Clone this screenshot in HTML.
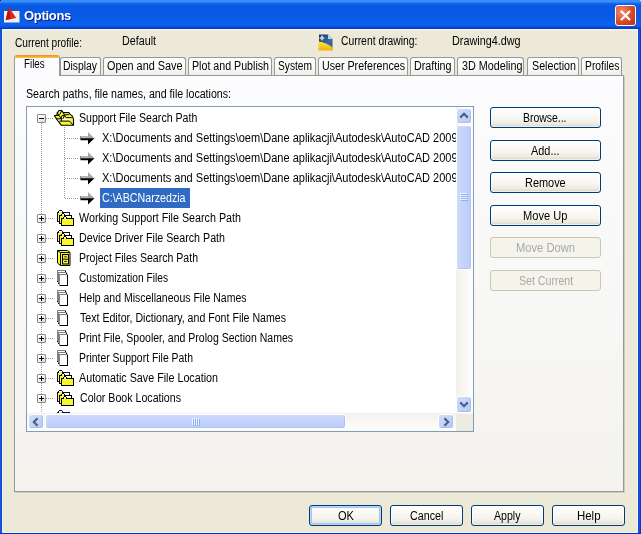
<!DOCTYPE html>
<html>
<head>
<meta charset="utf-8">
<title>Options</title>
<style>
html,body{margin:0;padding:0;}
body{width:641px;height:534px;overflow:hidden;background:#fff;position:relative;font-family:"Liberation Sans",sans-serif;font-size:11px;color:#000;}
div,span,svg{position:absolute;}
#win{left:0;top:0;width:641px;height:534px;background:#0A45D8;overflow:hidden;border-radius:0 3px 0 0;}
#frameL{left:0;top:29px;width:2px;height:505px;background:linear-gradient(to right,#1C5EEA,#0A3FC8);}
#frameR{left:638px;top:29px;width:3px;height:505px;background:linear-gradient(to right,#0A3FC8,#1450E0 50%,#0A30B0);}
#frameB{left:0;top:533px;width:641px;height:1px;background:#0A2FB0;}
#title{left:0;top:0;width:641px;height:29px;background:linear-gradient(to bottom,#3A8EF8 0%,#3A8EF8 6%,#0E62EA 13%,#0858E4 22%,#0A5AE8 60%,#0C60F0 85%,#0A54E0 92%,#083CBC 97%,#0A3CC0 100%);}
#titletext{will-change:transform;left:23.5px;top:7px;font-weight:bold;font-size:13px;line-height:17px;color:#fff;text-shadow:1px 1px 0 #0A1883;white-space:nowrap;letter-spacing:-0.3px;}
#client{left:2px;top:29px;width:636px;height:504px;background:#ECE9D8;box-shadow:inset 1px 1px 0 #F2F5FC, inset -1px -1px 0 #F2F5FC, inset 0 2px 0 #EFEEE6;}
.t{white-space:nowrap;line-height:14px;font-size:12px;transform-origin:0 0;filter:grayscale(1);}
.tab{top:57px;height:19px;box-sizing:border-box;border:1px solid #919B9C;border-bottom:none;border-radius:3px 3px 0 0;background:linear-gradient(#FFFFFF,#FAFAF9 50%,#F0F0EA 90%,#ECEBE6);}
#tabsel{left:14px;top:55px;width:46px;height:21px;box-sizing:border-box;border:1px solid #919B9C;border-bottom:none;border-top:none;border-radius:3px 3px 0 0;background:#FCFCFE;overflow:hidden;}
#tabsel i{position:absolute;left:0;top:0;width:100%;height:3px;background:linear-gradient(#E68B2C,#FFC73C);}
#panel{left:14px;top:75px;width:610px;height:417px;box-sizing:border-box;border:1px solid #919B9C;background:linear-gradient(#FCFCFE,#F4F3EE);box-shadow:1px 1px 0 rgba(0,0,0,0.12);}
#tree{left:26px;top:106px;width:448px;height:326px;box-sizing:border-box;border:1px solid #7F9DB9;background:#fff;overflow:hidden;}
#view{left:0;top:0;width:429px;height:306px;overflow:hidden;background:#fff;}
.btn{box-sizing:border-box;border:1px solid #003C74;border-radius:3px;background:linear-gradient(#FFFFFF,#F6F5EF 60%,#ECEADF 85%,#D6D0C5);height:21px;box-shadow:inset 0 0 0 1px rgba(255,255,255,.6);}
.btn.def{box-shadow:inset 0 0 0 1px #BCD4F6, inset 0 0 0 2px #A4C4F2;}
.btn.dis{border-color:#C9C7BA;background:#F5F4EA;box-shadow:none;}
.vd{width:1px;background-image:linear-gradient(to bottom,#9C9C9C 50%,transparent 50%);background-size:1px 2px;}
.hd{height:1px;background-image:linear-gradient(to right,#9C9C9C 50%,transparent 50%);background-size:2px 1px;}
.pm{width:9px;height:9px;box-sizing:border-box;border:1px solid #8B8B8B;border-radius:1px;background:linear-gradient(135deg,#FFFFFF 20%,#D9D6CA 100%);}
.pm b{position:absolute;left:1px;top:3px;width:5px;height:1px;background:#000;}
.pm u{position:absolute;left:3px;top:1px;width:1px;height:5px;background:#000;}
.sbtn{width:16px;height:16px;box-sizing:border-box;border:1px solid #FFFFFF;border-radius:3px;background:linear-gradient(135deg,#D0DDFE,#B6C9F7);box-shadow:inset -1px -1px 0 #A8BCF0;}
.thumb{box-sizing:border-box;border:1px solid #FFFFFF;border-radius:3px;background:#C3D3FD;box-shadow:inset -1px -1px 0 #B0C2F4, inset 1px 1px 0 #CCDAFE;}
</style>
</head>
<body>
<div id="win"><div id="title"></div>
<div style="left:615px;top:5px;width:21px;height:21px;box-sizing:border-box;border:1px solid #fff;border-radius:3px;background:radial-gradient(circle at 30% 30%,#F0906E,#D8482A 55%,#B8300E);"><svg width="19" height="19" viewBox="0 0 19 19" style="left:0;top:0"><path d="M5 5 L14 14 M14 5 L5 14" stroke="#fff" stroke-width="2.2" stroke-linecap="butt" fill="none"/></svg></div>
<svg width="18" height="18" viewBox="0 0 18 18" style="left:3px;top:6px"><rect x="1" y="5" width="15.5" height="11.5" fill="#F4EEE4"/><path d="M5.7 1 L13.2 12 L2.7 14 Z" fill="#D8261C"/><path d="M5.7 1 L7.5 13 L2.7 14 Z" fill="#B8160E"/></svg>
<div style="left:0;top:0;width:1px;height:1px;background:#001A80;"></div>
<div id="titletext">Options</div>
<div id="client"></div><div id="frameL"></div><div id="frameR"></div><div id="frameB"></div></div>
<div class="t" style="left:14.5px;top:36px;transform:scaleX(0.8442);">Current profile:</div>
<div class="t" style="left:121.7px;top:34px;transform:scaleX(0.8942);">Default</div>
<div class="t" style="left:340.5px;top:34px;transform:scaleX(0.8624);">Current drawing:</div>
<div class="t" style="left:451.5px;top:34px;transform:scaleX(0.9009);">Drawing4.dwg</div>
<svg width="16" height="17" viewBox="0 0 16 17" style="left:318px;top:34px"><defs><linearGradient id="dg" x1="0" y1="0" x2="1" y2="1"><stop offset="0" stop-color="#1C2C5C"/><stop offset="0.6" stop-color="#3C6CA0"/><stop offset="1" stop-color="#2C4C8C"/></linearGradient><linearGradient id="yg" x1="0" y1="0" x2="0" y2="1"><stop offset="0" stop-color="#FFE838"/><stop offset="1" stop-color="#F0B010"/></linearGradient></defs><path d="M1 0.5 H10 L14.5 5 V16 H1 Z" fill="url(#dg)"/><path d="M10 0.5 L14.5 5 H10 Z" fill="#B8D4F0"/><path d="M0.5 7.5 C6 8 11 10.5 15 14 V16.5 H0.5 Z" fill="url(#yg)"/><path d="M4 1.5 V6.5 M1.5 4 H6.5" stroke="#E8FFFF" stroke-width="1.2"/><circle cx="4" cy="4" r="1.5" fill="#E8FFFF"/><circle cx="4" cy="4" r="0.6" fill="#2C4C7C"/></svg>
<div id="panel"></div>
<div class="tab" style="left:60px;width:41px;"></div>
<div class="tab" style="left:103px;width:83px;"></div>
<div class="tab" style="left:188px;width:84px;"></div>
<div class="tab" style="left:274px;width:42px;"></div>
<div class="tab" style="left:318px;width:90px;"></div>
<div class="tab" style="left:410px;width:45px;"></div>
<div class="tab" style="left:457px;width:67px;"></div>
<div class="tab" style="left:527px;width:52px;"></div>
<div class="tab" style="left:581px;width:41px;"></div>
<div style="left:15px;top:75px;width:608px;height:1px;background:#919B9C;"></div>
<div id="tabsel"><i></i></div>
<div style="left:15px;top:75px;width:44px;height:1px;background:#FCFCFE;"></div>
<div class="t" style="left:62.7px;top:59px;transform:scaleX(0.8641);">Display</div>
<div class="t" style="left:107px;top:59px;transform:scaleX(0.9053);">Open and Save</div>
<div class="t" style="left:192px;top:59px;transform:scaleX(0.8879);">Plot and Publish</div>
<div class="t" style="left:277.5px;top:59px;transform:scaleX(0.8498);">System</div>
<div class="t" style="left:322px;top:59px;transform:scaleX(0.8889);">User Preferences</div>
<div class="t" style="left:414px;top:59px;transform:scaleX(0.8925);">Drafting</div>
<div class="t" style="left:461.5px;top:59px;transform:scaleX(0.8980);">3D Modeling</div>
<div class="t" style="left:531.5px;top:59px;transform:scaleX(0.8913);">Selection</div>
<div class="t" style="left:585px;top:59px;transform:scaleX(0.8597);">Profiles</div>
<div class="t" style="left:23.6px;top:57px;transform:scaleX(0.8131);">Files</div>
<div class="t" style="left:25.5px;top:87px;transform:scaleX(0.8857);">Search paths, file names, and file locations:</div>
<div id="tree"><div id="view">
<div class="vd" style="left:14px;top:16px;height:291px;"></div>
<div class="vd" style="left:37px;top:20px;height:72px;"></div>
<div class="hd" style="left:19px;top:11px;width:8px;"></div>
<div class="pm" style="left:10px;top:7px;"><b></b></div>
<svg width="21" height="17" viewBox="0 0 21 17" style="left:27px;top:3px"><path d="M5.1 0.5 H7.7 L9.2 2.6 L14.9 2.5 L16 4.4 L17.9 5.6 L19.5 8.9 V15.3 H7.4 L2.5 8.9 L0.5 5.8 L2.9 5.2 L3.2 2.9 Z" fill="#F6F63A" stroke="#000" stroke-width="1.1" stroke-linejoin="round"/><path d="M8.2 8.8 H15.4 L16.2 10.7 H8.2 Z" fill="#FFF6F2"/><path d="M3.4 9.3 H6.6 V10.7 H4.6 Z" fill="#fff"/><path d="M10.6 3.4 H14.4 L15 4.5 H11.2 Z" fill="#FFFFE0"/><path d="M5.5 11.1 H15.6 L19 15 M7.4 8.1 V11.1 M2.5 8.8 H6.8 M12.2 7.6 H17.8 M9.2 2.6 L10.7 5.5 L12.2 7.6 M0.5 5.4 H5 M3.2 2.9 L5 5.4 L7 8.5 M7.7 0.7 L5.6 4.6 M10.7 5.5 L8 5.6 L6.8 8.6 M10.7 5.5 L8.8 8.9 M14.9 4.6 L10.6 4.8" stroke="#000" stroke-width="1" fill="none"/></svg>
<div class="t" style="left:51.599999999999994px;top:4px;transform:scaleX(0.8823);">Support File Search Path</div>
<div class="hd" style="left:38px;top:31px;width:13px;"></div>
<svg width="15" height="13" viewBox="0 0 15 13" style="left:53px;top:25px"><path d="M8 0 L14.5 6.4 H8 Z" fill="#A8A8A8"/><path d="M1 4 H8 V6.4 H0 Z" fill="#B4B4B4"/><path d="M0 6.2 H14.5 L8 12.5 V8.3 H0.6 Z" fill="#000"/><path d="M0 4.5 L1 4 V8 H0 Z" fill="#707070"/></svg>
<div class="t" style="left:74.5px;top:24px;transform:scaleX(0.9190);">X:\Documents and Settings\oem\Dane aplikacji\Autodesk\AutoCAD 2009</div>
<div class="hd" style="left:38px;top:51px;width:13px;"></div>
<svg width="15" height="13" viewBox="0 0 15 13" style="left:53px;top:45px"><path d="M8 0 L14.5 6.4 H8 Z" fill="#A8A8A8"/><path d="M1 4 H8 V6.4 H0 Z" fill="#B4B4B4"/><path d="M0 6.2 H14.5 L8 12.5 V8.3 H0.6 Z" fill="#000"/><path d="M0 4.5 L1 4 V8 H0 Z" fill="#707070"/></svg>
<div class="t" style="left:74.5px;top:44px;transform:scaleX(0.9190);">X:\Documents and Settings\oem\Dane aplikacji\Autodesk\AutoCAD 2009</div>
<div class="hd" style="left:38px;top:71px;width:13px;"></div>
<svg width="15" height="13" viewBox="0 0 15 13" style="left:53px;top:65px"><path d="M8 0 L14.5 6.4 H8 Z" fill="#A8A8A8"/><path d="M1 4 H8 V6.4 H0 Z" fill="#B4B4B4"/><path d="M0 6.2 H14.5 L8 12.5 V8.3 H0.6 Z" fill="#000"/><path d="M0 4.5 L1 4 V8 H0 Z" fill="#707070"/></svg>
<div class="t" style="left:74.5px;top:64px;transform:scaleX(0.9190);">X:\Documents and Settings\oem\Dane aplikacji\Autodesk\AutoCAD 2009</div>
<div class="hd" style="left:38px;top:91px;width:13px;"></div>
<svg width="15" height="13" viewBox="0 0 15 13" style="left:53px;top:85px"><path d="M8 0 L14.5 6.4 H8 Z" fill="#A8A8A8"/><path d="M1 4 H8 V6.4 H0 Z" fill="#B4B4B4"/><path d="M0 6.2 H14.5 L8 12.5 V8.3 H0.6 Z" fill="#000"/><path d="M0 4.5 L1 4 V8 H0 Z" fill="#707070"/></svg>
<div style="left:73px;top:81px;width:90px;height:20px;background:#316AC5;"></div>
<div class="t" style="left:75px;top:84px;transform:scaleX(0.8880);color:#fff;">C:\ABCNarzedzia</div>
<div class="hd" style="left:19px;top:111px;width:8px;"></div>
<div class="pm" style="left:10px;top:107px;"><b></b><u></u></div>
<svg width="18" height="16" viewBox="0 0 18 16" style="left:30px;top:103px" shape-rendering="crispEdges"><path d="M0.5 11.5 V2.5 H1.5 V1.5 L2.5 0.5 H4.5 L5.5 1.5 V2.5 H12.5 V11.5 Z" fill="#F4F43C" stroke="#0A0A50"/><rect x="2" y="1" width="3" height="1" fill="#FFFFE8"/><rect x="7" y="3" width="5" height="2" fill="#FFFFE0"/><path d="M2.5 13.5 V5.5 H4.5 V4.5 L5.5 3.5 H6.5 L7.5 4.5 V5.5 H14.5 V13.5 Z" fill="#F4F43C" stroke="#000"/><rect x="5" y="4" width="2" height="1" fill="#FFFFE8"/><rect x="9" y="6" width="5" height="2" fill="#FFFFE0"/><path d="M4.5 15.5 V8.5 H6.5 V7.5 L7.5 6.5 H8.5 L9.5 7.5 V8.5 H16.5 V15.5 Z" fill="#F8F830" stroke="#000"/><rect x="7" y="7" width="2" height="1" fill="#FFFFE8"/></svg>
<div class="t" style="left:52px;top:104px;transform:scaleX(0.8940);">Working Support File Search Path</div>
<div class="hd" style="left:19px;top:131px;width:8px;"></div>
<div class="pm" style="left:10px;top:127px;"><b></b><u></u></div>
<svg width="18" height="16" viewBox="0 0 18 16" style="left:30px;top:123px" shape-rendering="crispEdges"><path d="M0.5 11.5 V2.5 H1.5 V1.5 L2.5 0.5 H4.5 L5.5 1.5 V2.5 H12.5 V11.5 Z" fill="#F4F43C" stroke="#0A0A50"/><rect x="2" y="1" width="3" height="1" fill="#FFFFE8"/><rect x="7" y="3" width="5" height="2" fill="#FFFFE0"/><path d="M2.5 13.5 V5.5 H4.5 V4.5 L5.5 3.5 H6.5 L7.5 4.5 V5.5 H14.5 V13.5 Z" fill="#F4F43C" stroke="#000"/><rect x="5" y="4" width="2" height="1" fill="#FFFFE8"/><rect x="9" y="6" width="5" height="2" fill="#FFFFE0"/><path d="M4.5 15.5 V8.5 H6.5 V7.5 L7.5 6.5 H8.5 L9.5 7.5 V8.5 H16.5 V15.5 Z" fill="#F8F830" stroke="#000"/><rect x="7" y="7" width="2" height="1" fill="#FFFFE8"/></svg>
<div class="t" style="left:51.599999999999994px;top:124px;transform:scaleX(0.8899);">Device Driver File Search Path</div>
<div class="hd" style="left:19px;top:151px;width:8px;"></div>
<div class="pm" style="left:10px;top:147px;"><b></b><u></u></div>
<svg width="14" height="17" viewBox="0 0 14 17" style="left:30px;top:143px"><path d="M0.5 0.5 H10.5 L13 2.5 V15.5 H3.5 L0.5 13 Z" fill="#FFFF30" stroke="#000"/><path d="M0.5 0.5 L3.5 2.5 H13 M3.5 2.5 V15.5" stroke="#000" fill="none"/><rect x="5.5" y="4.5" width="6" height="9.5" fill="#FAFA40" stroke="#000" stroke-width="1.1"/><path d="M5.5 9.2 H11.5" stroke="#000" stroke-width="1"/><rect x="7.4" y="6.3" width="2.2" height="1.1" fill="#000"/><rect x="7.4" y="10.9" width="2.2" height="1.1" fill="#000"/></svg>
<div class="t" style="left:51.7px;top:144px;transform:scaleX(0.8789);">Project Files Search Path</div>
<div class="hd" style="left:19px;top:171px;width:8px;"></div>
<div class="pm" style="left:10px;top:167px;"><b></b><u></u></div>
<svg width="12" height="16" viewBox="0 0 12 16" style="left:30px;top:163px" shape-rendering="crispEdges"><path d="M0.5 11.5 V0.5 H8.5" fill="none" stroke="#808080"/><path d="M8.5 0.5 V2.5" stroke="#000" fill="none"/><rect x="1" y="1" width="7" height="1" fill="#fff"/><path d="M1.5 13.5 V2.5 H9.5" fill="none" stroke="#808080"/><path d="M9.5 2.5 V4.5" stroke="#000" fill="none"/><rect x="0" y="11" width="1" height="1" fill="#000"/><rect x="1" y="13" width="1" height="1" fill="#000"/><path d="M2.5 15.5 V4.5 H10.5" fill="#fff" stroke="#808080"/><path d="M10.5 4.5 V15.5 H2.5" fill="none" stroke="#000"/></svg>
<div class="t" style="left:51.8px;top:164px;transform:scaleX(0.8500);">Customization Files</div>
<div class="hd" style="left:19px;top:191px;width:8px;"></div>
<div class="pm" style="left:10px;top:187px;"><b></b><u></u></div>
<svg width="12" height="16" viewBox="0 0 12 16" style="left:30px;top:183px" shape-rendering="crispEdges"><path d="M0.5 11.5 V0.5 H8.5" fill="none" stroke="#808080"/><path d="M8.5 0.5 V2.5" stroke="#000" fill="none"/><rect x="1" y="1" width="7" height="1" fill="#fff"/><path d="M1.5 13.5 V2.5 H9.5" fill="none" stroke="#808080"/><path d="M9.5 2.5 V4.5" stroke="#000" fill="none"/><rect x="0" y="11" width="1" height="1" fill="#000"/><rect x="1" y="13" width="1" height="1" fill="#000"/><path d="M2.5 15.5 V4.5 H10.5" fill="#fff" stroke="#808080"/><path d="M10.5 4.5 V15.5 H2.5" fill="none" stroke="#000"/></svg>
<div class="t" style="left:51.7px;top:184px;transform:scaleX(0.8750);">Help and Miscellaneous File Names</div>
<div class="hd" style="left:19px;top:211px;width:8px;"></div>
<div class="pm" style="left:10px;top:207px;"><b></b><u></u></div>
<svg width="12" height="16" viewBox="0 0 12 16" style="left:30px;top:203px" shape-rendering="crispEdges"><path d="M0.5 11.5 V0.5 H8.5" fill="none" stroke="#808080"/><path d="M8.5 0.5 V2.5" stroke="#000" fill="none"/><rect x="1" y="1" width="7" height="1" fill="#fff"/><path d="M1.5 13.5 V2.5 H9.5" fill="none" stroke="#808080"/><path d="M9.5 2.5 V4.5" stroke="#000" fill="none"/><rect x="0" y="11" width="1" height="1" fill="#000"/><rect x="1" y="13" width="1" height="1" fill="#000"/><path d="M2.5 15.5 V4.5 H10.5" fill="#fff" stroke="#808080"/><path d="M10.5 4.5 V15.5 H2.5" fill="none" stroke="#000"/></svg>
<div class="t" style="left:52.5px;top:204px;transform:scaleX(0.8834);">Text Editor, Dictionary, and Font File Names</div>
<div class="hd" style="left:19px;top:231px;width:8px;"></div>
<div class="pm" style="left:10px;top:227px;"><b></b><u></u></div>
<svg width="12" height="16" viewBox="0 0 12 16" style="left:30px;top:223px" shape-rendering="crispEdges"><path d="M0.5 11.5 V0.5 H8.5" fill="none" stroke="#808080"/><path d="M8.5 0.5 V2.5" stroke="#000" fill="none"/><rect x="1" y="1" width="7" height="1" fill="#fff"/><path d="M1.5 13.5 V2.5 H9.5" fill="none" stroke="#808080"/><path d="M9.5 2.5 V4.5" stroke="#000" fill="none"/><rect x="0" y="11" width="1" height="1" fill="#000"/><rect x="1" y="13" width="1" height="1" fill="#000"/><path d="M2.5 15.5 V4.5 H10.5" fill="#fff" stroke="#808080"/><path d="M10.5 4.5 V15.5 H2.5" fill="none" stroke="#000"/></svg>
<div class="t" style="left:51.7px;top:224px;transform:scaleX(0.8766);">Print File, Spooler, and Prolog Section Names</div>
<div class="hd" style="left:19px;top:251px;width:8px;"></div>
<div class="pm" style="left:10px;top:247px;"><b></b><u></u></div>
<svg width="12" height="16" viewBox="0 0 12 16" style="left:30px;top:243px" shape-rendering="crispEdges"><path d="M0.5 11.5 V0.5 H8.5" fill="none" stroke="#808080"/><path d="M8.5 0.5 V2.5" stroke="#000" fill="none"/><rect x="1" y="1" width="7" height="1" fill="#fff"/><path d="M1.5 13.5 V2.5 H9.5" fill="none" stroke="#808080"/><path d="M9.5 2.5 V4.5" stroke="#000" fill="none"/><rect x="0" y="11" width="1" height="1" fill="#000"/><rect x="1" y="13" width="1" height="1" fill="#000"/><path d="M2.5 15.5 V4.5 H10.5" fill="#fff" stroke="#808080"/><path d="M10.5 4.5 V15.5 H2.5" fill="none" stroke="#000"/></svg>
<div class="t" style="left:51.7px;top:244px;transform:scaleX(0.8676);">Printer Support File Path</div>
<div class="hd" style="left:19px;top:271px;width:8px;"></div>
<div class="pm" style="left:10px;top:267px;"><b></b><u></u></div>
<svg width="18" height="16" viewBox="0 0 18 16" style="left:30px;top:263px" shape-rendering="crispEdges"><path d="M0.5 11.5 V2.5 H1.5 V1.5 L2.5 0.5 H4.5 L5.5 1.5 V2.5 H12.5 V11.5 Z" fill="#F4F43C" stroke="#0A0A50"/><rect x="2" y="1" width="3" height="1" fill="#FFFFE8"/><rect x="7" y="3" width="5" height="2" fill="#FFFFE0"/><path d="M2.5 13.5 V5.5 H4.5 V4.5 L5.5 3.5 H6.5 L7.5 4.5 V5.5 H14.5 V13.5 Z" fill="#F4F43C" stroke="#000"/><rect x="5" y="4" width="2" height="1" fill="#FFFFE8"/><rect x="9" y="6" width="5" height="2" fill="#FFFFE0"/><path d="M4.5 15.5 V8.5 H6.5 V7.5 L7.5 6.5 H8.5 L9.5 7.5 V8.5 H16.5 V15.5 Z" fill="#F8F830" stroke="#000"/><rect x="7" y="7" width="2" height="1" fill="#FFFFE8"/></svg>
<div class="t" style="left:52px;top:264px;transform:scaleX(0.8944);">Automatic Save File Location</div>
<div class="hd" style="left:19px;top:291px;width:8px;"></div>
<div class="pm" style="left:10px;top:287px;"><b></b><u></u></div>
<svg width="18" height="16" viewBox="0 0 18 16" style="left:30px;top:283px" shape-rendering="crispEdges"><path d="M0.5 11.5 V2.5 H1.5 V1.5 L2.5 0.5 H4.5 L5.5 1.5 V2.5 H12.5 V11.5 Z" fill="#F4F43C" stroke="#0A0A50"/><rect x="2" y="1" width="3" height="1" fill="#FFFFE8"/><rect x="7" y="3" width="5" height="2" fill="#FFFFE0"/><path d="M2.5 13.5 V5.5 H4.5 V4.5 L5.5 3.5 H6.5 L7.5 4.5 V5.5 H14.5 V13.5 Z" fill="#F4F43C" stroke="#000"/><rect x="5" y="4" width="2" height="1" fill="#FFFFE8"/><rect x="9" y="6" width="5" height="2" fill="#FFFFE0"/><path d="M4.5 15.5 V8.5 H6.5 V7.5 L7.5 6.5 H8.5 L9.5 7.5 V8.5 H16.5 V15.5 Z" fill="#F8F830" stroke="#000"/><rect x="7" y="7" width="2" height="1" fill="#FFFFE8"/></svg>
<div class="t" style="left:52.5px;top:284px;transform:scaleX(0.8855);">Color Book Locations</div>
<div class="hd" style="left:19px;top:311px;width:8px;"></div>
<div class="pm" style="left:10px;top:307px;"><b></b><u></u></div>
<svg width="18" height="16" viewBox="0 0 18 16" style="left:30px;top:303px" shape-rendering="crispEdges"><path d="M0.5 11.5 V2.5 H1.5 V1.5 L2.5 0.5 H4.5 L5.5 1.5 V2.5 H12.5 V11.5 Z" fill="#F4F43C" stroke="#0A0A50"/><rect x="2" y="1" width="3" height="1" fill="#FFFFE8"/><rect x="7" y="3" width="5" height="2" fill="#FFFFE0"/><path d="M2.5 13.5 V5.5 H4.5 V4.5 L5.5 3.5 H6.5 L7.5 4.5 V5.5 H14.5 V13.5 Z" fill="#F4F43C" stroke="#000"/><rect x="5" y="4" width="2" height="1" fill="#FFFFE8"/><rect x="9" y="6" width="5" height="2" fill="#FFFFE0"/><path d="M4.5 15.5 V8.5 H6.5 V7.5 L7.5 6.5 H8.5 L9.5 7.5 V8.5 H16.5 V15.5 Z" fill="#F8F830" stroke="#000"/><rect x="7" y="7" width="2" height="1" fill="#FFFFE8"/></svg>
</div>
<div style="left:429px;top:0;width:17px;height:307px;background:linear-gradient(to right,#F3F1EC,#FEFEFB);"></div>
<div class="sbtn" style="left:429px;top:1px;"><svg width="14" height="14" viewBox="0 0 14 14" style="left:0;top:0"><path d="M3.2 8.6 L7 4.8 L10.8 8.6" stroke="#4D6185" stroke-width="2.2" fill="none"/></svg></div>
<div class="thumb" style="background:linear-gradient(to right,#CDDAFE,#BCCCF9);left:429px;top:18px;width:16px;height:145px;"><svg width="8" height="8" viewBox="0 0 8 8" style="left:3px;top:67px" shape-rendering="crispEdges"><path d="M0 0.5 H7 M0 2.5 H7 M0 4.5 H7 M0 6.5 H7" stroke="#EEF4FE"/><path d="M1 1.5 H8 M1 3.5 H8 M1 5.5 H8 M1 7.5 H8" stroke="#8CB0F8"/></svg></div>
<div class="sbtn" style="left:429px;top:289px;height:17px;"><svg width="14" height="14" viewBox="0 0 14 14" style="left:0;top:0"><path d="M3.2 5.4 L7 9.2 L10.8 5.4" stroke="#4D6185" stroke-width="2.2" fill="none"/></svg></div>
<div style="left:0;top:306px;width:429px;height:18px;background:linear-gradient(to bottom,#F3F1EC,#FEFEFB);"></div>
<div class="sbtn" style="left:1px;top:307px;height:15px;"><svg width="14" height="14" viewBox="0 0 14 14" style="left:0;top:0"><path d="M8.6 3.2 L4.8 7 L8.6 10.8" stroke="#4D6185" stroke-width="2.2" fill="none"/></svg></div>
<div class="thumb" style="background:linear-gradient(to bottom,#CDDAFE,#BCCCF9);left:18px;top:307px;width:301px;height:15px;"><svg width="8" height="8" viewBox="0 0 8 8" style="left:146px;top:3px" shape-rendering="crispEdges"><path d="M0.5 0 V7 M2.5 0 V7 M4.5 0 V7 M6.5 0 V7" stroke="#EEF4FE"/><path d="M1.5 1 V8 M3.5 1 V8 M5.5 1 V8 M7.5 1 V8" stroke="#8CB0F8"/></svg></div>
<div class="sbtn" style="left:411px;top:307px;height:15px;"><svg width="14" height="14" viewBox="0 0 14 14" style="left:0;top:0"><path d="M5.4 3.2 L9.2 7 L5.4 10.8" stroke="#4D6185" stroke-width="2.2" fill="none"/></svg></div>
<div style="left:429px;top:307px;width:17px;height:17px;background:#EEECE1;"></div>
</div>
<div class="btn " style="left:490px;top:107px;width:111px;"></div>
<div class="t" style="left:523.2px;top:111px;transform:scaleX(0.8697);">Browse...</div>
<div class="btn " style="left:490px;top:140px;width:111px;"></div>
<div class="t" style="left:530.5px;top:144px;transform:scaleX(0.9090);">Add...</div>
<div class="btn " style="left:490px;top:172px;width:111px;"></div>
<div class="t" style="left:525.1px;top:176px;transform:scaleX(0.9108);">Remove</div>
<div class="btn " style="left:490px;top:205px;width:111px;"></div>
<div class="t" style="left:523.2px;top:209px;transform:scaleX(0.9226);">Move Up</div>
<div class="btn dis" style="left:490px;top:237px;width:111px;"></div>
<div class="t" style="left:516px;top:241px;transform:scaleX(0.9312);color:#ACA899;">Move Down</div>
<div class="btn dis" style="left:490px;top:270px;width:111px;"></div>
<div class="t" style="left:518.9px;top:274px;transform:scaleX(0.8833);color:#ACA899;">Set Current</div>
<div class="btn def" style="left:309px;top:505px;width:73px;"></div>
<div class="t" style="left:337.5px;top:509px;transform:scaleX(0.9228);">OK</div>
<div class="btn " style="left:390px;top:505px;width:73px;"></div>
<div class="t" style="left:410px;top:509px;transform:scaleX(0.8968);">Cancel</div>
<div class="btn " style="left:471px;top:505px;width:73px;"></div>
<div class="t" style="left:493.5px;top:509px;transform:scaleX(0.8828);">Apply</div>
<div class="btn " style="left:552px;top:505px;width:73px;"></div>
<div class="t" style="left:577px;top:509px;transform:scaleX(0.9522);">Help</div>
</body>
</html>
